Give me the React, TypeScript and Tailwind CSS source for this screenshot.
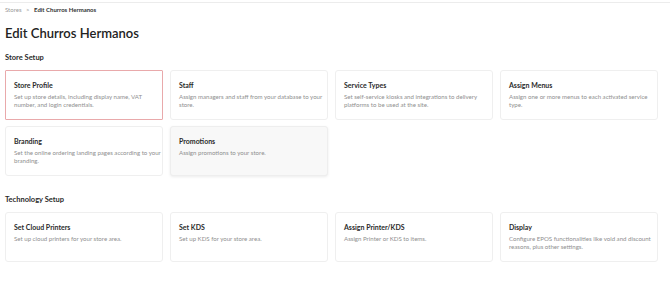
const storeSetup = [
  { title: 'Store Profile', lines: ['Set up store details, including display name, VAT', 'number, and login credentials.'], state: 'active' },
  { title: 'Staff', lines: ['Assign managers and staff from your database to your', 'store.'] },
  { title: 'Service Types', lines: ['Set self-service kiosks and integrations to delivery', 'platforms to be used at the site.'] },
  { title: 'Assign Menus', lines: ['Assign one or more menus to each activated service', 'type.'] },
  { title: 'Branding', lines: ['Set the online ordering landing pages according to your', 'branding.'] },
  { title: 'Promotions', lines: ['Assign promotions to your store.'], state: 'hover' },
];

const techSetup = [
  { title: 'Set Cloud Printers', lines: ['Set up cloud printers for your store area.'] },
  { title: 'Set KDS', lines: ['Set up KDS for your store area.'] },
  { title: 'Assign Printer/KDS', lines: ['Assign Printer or KDS to items.'] },
  { title: 'Display', lines: ['Configure EPOS functionalities like void and discount', 'reasons, plus other settings.'] },
];

type Item = { title: string; lines: string[]; state?: string };

function Card({ item }: { item: Item }) {
  let cls = 'h-[50px] px-[8px] pt-[9px] border rounded-[3px] bg-white border-[#efefef]';
  if (item.state === 'active') cls = 'h-[50px] px-[8px] pt-[9px] border rounded-[1px] bg-white border-[#e9a9ab]';
  if (item.state === 'hover') cls = 'h-[50px] px-[8px] pt-[9px] border rounded-[3px] bg-[#f8f8f8] border-[#eeeeee] shadow-[0_1px_3px_rgba(0,0,0,0.08)]';
  return (
    <div className={cls}>
      <div className="text-[7px] font-bold text-[#2b2b2b] leading-[10px]">{item.title}</div>
      <div className="mt-[3px] text-[6.1px] text-[#8f8f8f] leading-[8px] whitespace-nowrap">
        {item.lines.map((l, idx) => (
          <div key={idx}>{l}</div>
        ))}
      </div>
    </div>
  );
}

export default function App() {
  return (
    <div className="w-[670px] h-[282px] bg-white overflow-hidden" style={{ fontFamily: 'Lato, "Noto Sans", sans-serif' }}>
      <div className="h-[3px] border-b border-[#ececec]"></div>
      <div className="pl-[5px] pr-[12px]">
        <div className="mt-[3px] text-[6px] leading-[8px] text-[#999]">
          Stores <span className="mx-[3px]">&gt;</span> <span className="font-bold text-[#333]">Edit Churros Hermanos</span>
        </div>
        <h1 className="mt-[10px] text-[13px] leading-[18px] font-semibold text-[#222]">Edit Churros Hermanos</h1>
        <h2 className="mt-[11px] text-[7.5px] leading-[10px] font-bold text-[#2b2b2b]">Store Setup</h2>
        <div className="mt-[7px] grid grid-cols-4 gap-x-[7px] gap-y-[6px] w-[653px]">
          {storeSetup.map(i => <Card key={i.title} item={i} />)}
        </div>
        <h2 className="mt-[19px] text-[7.5px] leading-[10px] font-bold text-[#2b2b2b]">Technology Setup</h2>
        <div className="mt-[7px] grid grid-cols-4 gap-x-[7px] w-[653px]">
          {techSetup.map(i => <Card key={i.title} item={i} />)}
        </div>
      </div>
    </div>
  );
}
